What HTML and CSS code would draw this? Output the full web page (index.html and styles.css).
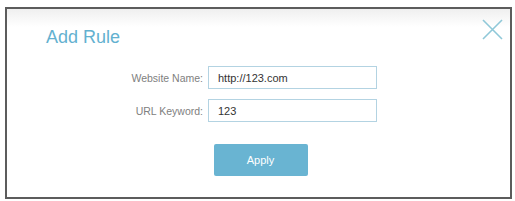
FILE: index.html
```html
<!DOCTYPE html>
<html>
  <head>
    <meta charset="utf-8">
    <title>Add Rule</title>
    <link rel="stylesheet" href="styles.css">
  </head>
  <body>
    <!-- 添加规则弹窗 -->
    <div class="dialog">
      <div class="dialog-head">
        <h2 class="dialog-title">Add Rule</h2>
        <button class="close" type="button" aria-label="Close">
          <svg width="21" height="21" viewBox="0 0 21 21">
            <path d="M1 1 L20 20 M20 1 L1 20" stroke="#8fc8d8" stroke-width="1.6" fill="none"/>
          </svg>
        </button>
      </div>
      <form class="rule-form">
        <label for="site">Website Name:</label>
        <input id="site" type="text" value="http://123.com">
        <label for="keyword">URL Keyword:</label>
        <input id="keyword" type="text" value="123">
      </form>
      <button class="apply" type="button">Apply</button>
    </div>
  </body>
</html>
```

FILE: styles.css
```css
body {
  margin: 0;
  padding: 7px 3px 0 5px;
  background: #fff;
  font-family: "Liberation Sans", Arial, sans-serif;
}
/* -------- 弹窗外框 ------------- */
.dialog {
  box-sizing: border-box;
  height: 192px;
  border: 2px solid #5c5c5c;
  background: linear-gradient(#efefef, #fff 18px);
}
.dialog-head {
  display: flex;
  justify-content: space-between;
  align-items: flex-start;
  padding: 17px 7px 0 39px;
}
.dialog-title {
  margin: 0;
  font-size: 18px;
  line-height: 22px;
  font-weight: normal;
  color: #63b1d0;
}
.close {
  margin-top: -7px;
  padding: 0;
  border: 0;
  background: none;
  width: 21px;
  height: 21px;
}
.close svg {
  display: block;
}
/* -------- 表单 ------------- */
.rule-form {
  display: grid;
  grid-template-columns: 196px 169px;
  column-gap: 5px;
  row-gap: 10px;
  align-items: center;
  margin: 18px 0 0;
}
.rule-form label {
  text-align: right;
  font-size: 10.5px;
  color: #808080;
}
.rule-form input {
  box-sizing: border-box;
  height: 23px;
  margin: 0;
  padding: 0 9px;
  border: 1px solid #b3d3e2;
  border-radius: 0;
  font-family: inherit;
  font-size: 11px;
  color: #333;
  outline: none;
}
.apply {
  display: block;
  width: 94px;
  height: 32px;
  margin: 22px auto 0;
  position: relative;
  left: 2px;
  border: 0;
  border-radius: 2px;
  background: #69b4d2;
  color: #fff;
  font-family: inherit;
  font-size: 11px;
}
```
